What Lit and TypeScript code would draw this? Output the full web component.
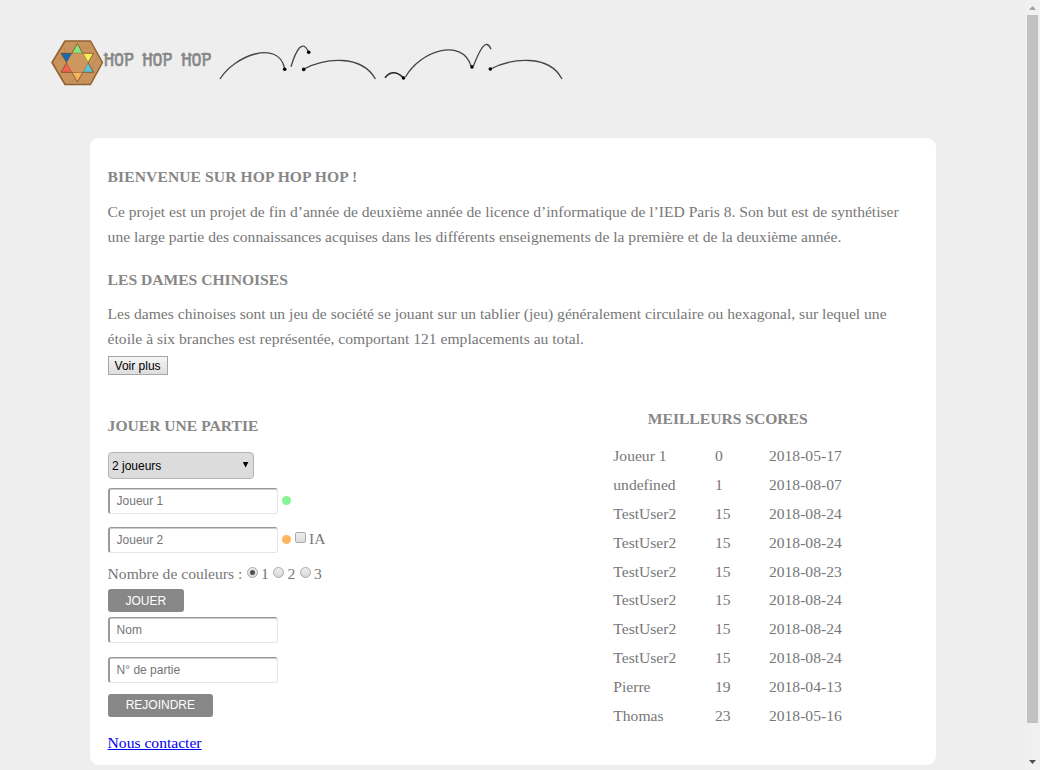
import { LitElement, html, css, svg } from "lit";
import { customElement } from "lit/decorators.js";

const SCORES = [
  ["Joueur 1", "0", "2018-05-17"],
  ["undefined", "1", "2018-08-07"],
  ["TestUser2", "15", "2018-08-24"],
  ["TestUser2", "15", "2018-08-24"],
  ["TestUser2", "15", "2018-08-23"],
  ["TestUser2", "15", "2018-08-24"],
  ["TestUser2", "15", "2018-08-24"],
  ["TestUser2", "15", "2018-08-24"],
  ["Pierre", "19", "2018-04-13"],
  ["Thomas", "23", "2018-05-16"],
];

const HOPS = [
  "M220 79C234 56 278 39 284.500 68",
  "M291 66.700C296 50 302.500 38.500 308.500 52",
  "M304 69C325 58 361 54 375.500 79",
  "M405.500 77C420 51 462 37 471 66",
  "M473.500 65.700C480 49 486 37.500 491 49.200",
  "M490.500 69C512 58 549 54 562 79",
];
const DOTS = [[284.7, 69.3], [308.7, 52.3], [303.7, 69.4], [403.5, 78], [472, 66.9], [490.3, 69]];
const WORDS = [104, 142.5, 181.5];

@customElement("app-header")
class AppHeader extends LitElement {
  static styles = css`
    :host { display: block; height: 138px; }
    svg { display: block; }
    .title { font: 18px "DejaVu Sans Mono", monospace; fill: #878787; stroke: #878787; stroke-width: .5px; }
  `;
  render() {
    return html`<svg width="620" height="138" viewBox="0 0 620 138">
      <g stroke-linejoin="round">
        <path d="M52 62.500L65 41H90.500L102.500 62.500L90.500 84.500H65Z" fill="#c8935c" stroke="#90602f" stroke-width="1.500" />
        <path d="M58 60Q67 54 64 47M70 83Q74 76 86 82M94 74Q90 62 98 58M80 46Q86 50 91 47" fill="none" stroke="#b98049" stroke-width=".6" />
        <g stroke="#6b4420" stroke-width=".7">
          <path d="M77.300 43.500L82.700 53.300H72Z" fill="#86e57f" />
          <path d="M93.500 53.300L88 62.700L82.700 53.300Z" fill="#f6ee55" />
          <path d="M93.500 72.300H82.700L88 62.700Z" fill="#5bc4cf" />
          <path d="M77.300 82L72 72.300H82.700Z" fill="#f9b45f" />
          <path d="M61 72.300L66.700 62.700L72 72.300Z" fill="#f4614f" />
          <path d="M61 53.300H72L66.700 62.700Z" fill="#126db5" />
        </g>
        <path d="M72 53.300H82.700L88 62.700L82.700 72.300H72L66.700 62.700Z" fill="#cf9760" />
      </g>
      ${WORDS.map((x) => svg`
        <text class="title" x=${x} y="65.500" textLength="30" lengthAdjust="spacingAndGlyphs">HOP</text>
        <path d=${`M${x - 0.5} 55H${x + 4}M${x + 7} 55H${x + 11}M${x + 12} 55H${x + 18}M${x + 12} 64.500H${x + 18}M${x + 19.500} 54H${x + 29}`}
          stroke="#878787" stroke-width="1.300" />`)}
      <g fill="none" stroke="#444" stroke-width="1.300">
        ${HOPS.map((d) => svg`<path d=${d} />`)}
        <path d="M385 77.700Q393 68 403 77.500" stroke="#222" stroke-width="1.600" />
      </g>
      ${DOTS.map(([x, y]) => svg`<circle cx=${x} cy=${y} r="1.800" />`)}
    </svg>`;
  }
}

@customElement("score-table")
class ScoreTable extends LitElement {
  static styles = css`
    :host { display: block; width: 240px; }
    h3 { margin: 0 0 12.500px; padding-left: 34.500px; font-size: inherit; line-height: 25px; color: #878787; }
    .row { display: grid; grid-template-columns: 101.700px 54px 1fr; height: 28.880px; line-height: 25px; }
  `;
  render() {
    return html`<h3>MEILLEURS SCORES</h3>
      ${SCORES.map((r) => html`<div class="row">${r.map((c) => html`<span>${c}</span>`)}</div>`)}`;
  }
}

@customElement("app-root")
class AppRoot extends LitElement {
  static styles = css`
    :host { display: flex; width: 1040px; height: 770px; overflow: hidden; background: #eee; color: #777;
      font: 15.600px/25px "Liberation Serif", serif; }
    * { box-sizing: border-box; }
    .page { flex: 1; }
    .card { margin-left: 90px; width: 846px; height: 627px; padding: 25.500px 17.600px 0; border-radius: 9px; background: #fff; }
    h3 { margin: 0; font-size: 15.600px; line-height: 25px; color: #878787; }
    .welcome { letter-spacing: .085px; }
    p { margin: 10px 0 18px; white-space: nowrap; }
    .about { margin: 9px 0 0; }
    button { display: block; font: 12px "Liberation Sans", sans-serif; }
    .more { margin-top: 5px; width: 60px; height: 19px; padding: 1px 0 0; border: 1px solid #a6a6a6; border-radius: 0; color: #000;
      background: linear-gradient(#f6f6f6, #ddd); }
    .cols { display: flex; }
    .game { width: 505.700px; padding-top: 38px; }
    score-table { margin-top: 31px; }
    .select { display: flex; justify-content: space-between; align-items: center; width: 146px; height: 27px; margin-top: 14px;
      padding: 1px 4px 0 3.400px; border: 1px solid #b4b4b4; border-radius: 4px; background: #dcdcdc;
      color: #000; font: 12px "Liberation Sans", sans-serif; }
    .caret { width: 6px; height: 6px; background: #000; clip-path: polygon(0 0, 100% 0, 50% 100%); margin-bottom: 2px; }
    .line { display: flex; align-items: center; height: 26px; }
    input { width: 170px; height: 26px; padding: 0 7px; border: solid; border-width: 1px 1px 1px 2px;
      border-color: #999 #e6e6e6 #e6e6e6 #999; border-radius: 3px; box-shadow: inset 0 1px #ccc;
      font: 12px "Liberation Sans", sans-serif; background: #fff; outline: 0; }
    input::placeholder { color: #757575; opacity: 1; }
    .dot { flex: none; width: 9px; height: 9px; border-radius: 50%; margin-left: 4.500px; margin-top: -1px; }
    .green { background: #85f493; }
    .orange { background: #feb562; }
    .check { width: 11px; height: 11px; margin: -4px 3px 0 3.500px; border: 1px solid #aaa; border-radius: 2px;
      background: linear-gradient(#eee, #dcdcdc); }
    .ia { margin: -2px 0 0 .4px; }
    .radio { display: flex; align-items: center; justify-content: center; width: 11px; height: 11px; margin: -2px 3px 0 4.700px;
      border: 1px solid #aaa; border-radius: 50%; background: linear-gradient(#eee, #d8d8d8); }
    .radio.on::after { content: ""; width: 5px; height: 5px; border-radius: 50%; background: #505050; }
    .solid { height: 23px; padding: 0; border: 0; border-radius: 3px; background: #878787; color: #fff; }
    .play { width: 76.500px; margin-top: 2px; padding-top: 1px; }
    .join { width: 105.500px; margin-top: 11px; }
    .link { display: inline-block; margin-top: 13px; color: #0000ee; text-decoration: underline; }
    .scroll { display: flex; flex-direction: column; align-items: center; justify-content: space-between; width: 15px;
      background: #f0f0f0; padding: 6px 0 6px; }
    .up, .down { width: 7px; height: 4px; }
    .up { background: #a3a3a3; clip-path: polygon(50% 0, 100% 100%, 0 100%); }
    .down { background: #505050; clip-path: polygon(0 0, 100% 0, 50% 100%); }
    .thumb { width: 11px; height: 708px; margin: 5px 0 auto; background: #c1c1c1; }
    .p1 { margin-top: 9px; }
    .p2 { margin-top: 13px; }
    .colors { margin-top: 8px; }
    .name { margin-top: 5px; }
    .number { margin-top: 14px; }
  `;
  render() {
    return html`<div class="page">
        <app-header></app-header>
        <main class="card">
          <h3 class="welcome">BIENVENUE SUR HOP HOP HOP !</h3>
          <p>Ce projet est un projet de fin d’année de deuxième année de licence d’informatique de l’IED Paris 8. Son but est de synthétiser<br />une large partie des connaissances acquises dans les différents enseignements de la première et de la deuxième année.</p>
          <h3>LES DAMES CHINOISES</h3>
          <p class="about">Les dames chinoises sont un jeu de société se jouant sur un tablier (jeu) généralement circulaire ou hexagonal, sur lequel une<br />étoile à six branches est représentée, comportant 121 emplacements au total.</p>
          <button class="more">Voir plus</button>
          <div class="cols">
            <section class="game">
              <h3>JOUER UNE PARTIE</h3>
              <div class="select">2 joueurs<span class="caret"></span></div>
              <div class="line p1"><input placeholder="Joueur 1" /><span class="dot green"></span></div>
              <div class="line p2"><input placeholder="Joueur 2" /><span class="dot orange"></span><span class="check"></span><span class="ia">IA</span></div>
              <div class="line colors">Nombre de couleurs :<span class="radio on"></span>1<span class="radio"></span>2<span class="radio"></span>3</div>
              <button class="solid play">JOUER</button>
              <div class="line name"><input placeholder="Nom" /></div>
              <div class="line number"><input placeholder="N° de partie" /></div>
              <button class="solid join">REJOINDRE</button>
              <a class="link">Nous contacter</a>
            </section>
            <score-table></score-table>
          </div>
        </main>
      </div>
      <div class="scroll"><span class="up"></span><span class="thumb"></span><span class="down"></span></div>`;
  }
}
